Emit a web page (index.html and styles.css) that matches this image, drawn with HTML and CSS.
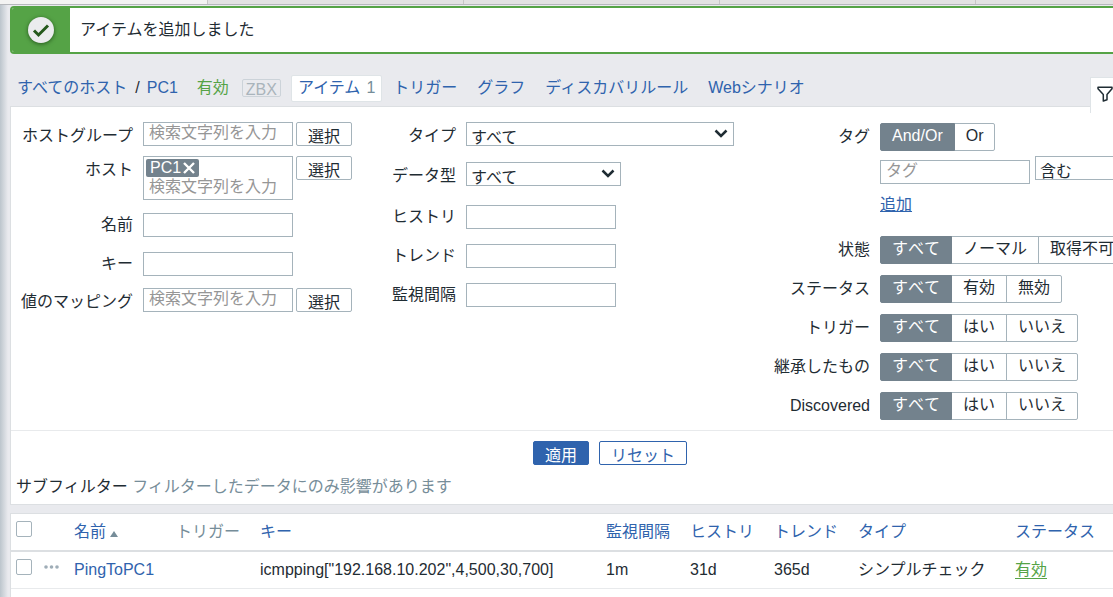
FILE: index.html
```html
<!DOCTYPE html>
<html lang="ja">
<head>
    <meta charset="UTF-8">
    <meta name="viewport" content="width=device-width, initial-scale=1.0">
    <title>アイテムの設定</title>
    <link rel="stylesheet" href="styles.css">
</head>
<body>
    <div class="tab-strip">
        <div class="strip-tab current"></div>
        <div class="strip-tab"></div>
        <div class="strip-tab"></div>
        <div class="strip-tab"></div>
        <div class="strip-tab"></div>
    </div>

    <main class="wrapper">
        <div class="message">
            <div class="message-icon">
                <svg width="36" height="36" viewBox="0 0 36 36">
                    <circle cx="18" cy="18" r="13" fill="#ebecee"/>
                    <path d="M11 18.5l4.5 4.5 9.5-9.5" fill="none" stroke="#25591c" stroke-width="3"/>
                </svg>
            </div>
            <span class="message-text">アイテムを追加しました</span>
        </div>

        <div class="top-bar">
            <nav class="host-nav">
                <a href="#">すべてのホスト</a>
                <span class="slash">/</span>
                <a href="#">PC1</a>
                <span class="enabled">有効</span>
                <span class="zbx">ZBX</span>
                <a href="#" class="selected">アイテム<span class="count">1</span></a>
                <a href="#">トリガー</a>
                <a href="#">グラフ</a>
                <a href="#">ディスカバリルール</a>
                <a href="#">Webシナリオ</a>
            </nav>
            <button class="filter-toggle" type="button" aria-label="フィルター">
                <svg width="16" height="16" viewBox="0 0 16 16">
                    <path d="M1 1.2h14v1.6L10 8.500v5.300L6.300 15V8.500L1 2.800z" fill="none" stroke="#1f2c33" stroke-width="1.500" stroke-linejoin="round"/>
                </svg>
            </button>
        </div>

        <form class="filter">
            <div class="filter-columns">
                <div class="filter-column">
                    <div class="row picker">
                        <label for="groups">ホストグループ</label>
                        <input type="text" id="groups" placeholder="検索文字列を入力">
                        <button type="button" class="btn-select">選択</button>
                    </div>
                    <div class="row picker">
                        <label for="hosts">ホスト</label>
                        <div class="multiselect">
                            <span class="tag">PC1<button type="button" aria-label="削除"><svg width="16" height="14" viewBox="0 0 16 14"><path d="M3 2l10 10M13 2L3 12" stroke="#fff" stroke-width="2.400"/></svg></button></span>
                            <input type="text" id="hosts" placeholder="検索文字列を入力">
                        </div>
                        <button type="button" class="btn-select">選択</button>
                    </div>
                    <div class="row plain">
                        <label for="name">名前</label>
                        <input type="text" id="name">
                    </div>
                    <div class="row plain">
                        <label for="key">キー</label>
                        <input type="text" id="key">
                    </div>
                    <div class="row picker">
                        <label for="valuemap">値のマッピング</label>
                        <input type="text" id="valuemap" placeholder="検索文字列を入力">
                        <button type="button" class="btn-select">選択</button>
                    </div>
                </div>

                <div class="filter-column">
                    <div class="row choice">
                        <label for="type">タイプ</label>
                        <div class="select type-select">
                            <select id="type"><option>すべて</option></select>
                            <svg width="14" height="9" viewBox="0 0 14 9"><path d="M1.500 1.500L7 7l5.500-5.500" fill="none" stroke="#1f2c33" stroke-width="2.500"/></svg>
                        </div>
                    </div>
                    <div class="row choice">
                        <label for="value-type">データ型</label>
                        <div class="select value-select">
                            <select id="value-type"><option>すべて</option></select>
                            <svg width="14" height="9" viewBox="0 0 14 9"><path d="M1.500 1.500L7 7l5.500-5.500" fill="none" stroke="#1f2c33" stroke-width="2.500"/></svg>
                        </div>
                    </div>
                    <div class="row plain">
                        <label for="history">ヒストリ</label>
                        <input type="text" id="history">
                    </div>
                    <div class="row plain">
                        <label for="trends">トレンド</label>
                        <input type="text" id="trends">
                    </div>
                    <div class="row plain">
                        <label for="interval">監視間隔</label>
                        <input type="text" id="interval">
                    </div>
                </div>

                <div class="filter-column">
                    <div class="row">
                        <label for="tag">タグ</label>
                        <div>
                            <div class="radios">
                                <input type="radio" name="evaltype" id="and-or" checked><label for="and-or">And/Or</label>
                                <input type="radio" name="evaltype" id="or"><label for="or">Or</label>
                            </div>
                            <div class="tag-row">
                                <input type="text" id="tag" placeholder="タグ">
                                <div class="select">
                                    <select aria-label="演算子"><option>含む</option></select>
                                </div>
                            </div>
                            <a href="#" class="add-link">追加</a>
                        </div>
                    </div>
                    <div class="row" role="radiogroup" aria-labelledby="l-state">
                        <span class="row-label" id="l-state">状態</span>
                        <div class="radios">
                            <input type="radio" name="state" id="state0" checked><label for="state0">すべて</label>
                            <input type="radio" name="state" id="state1"><label for="state1">ノーマル</label>
                            <input type="radio" name="state" id="state2"><label for="state2">取得不可</label>
                        </div>
                    </div>
                    <div class="row" role="radiogroup" aria-labelledby="l-status">
                        <span class="row-label" id="l-status">ステータス</span>
                        <div class="radios">
                            <input type="radio" name="status" id="status0" checked><label for="status0">すべて</label>
                            <input type="radio" name="status" id="status1"><label for="status1">有効</label>
                            <input type="radio" name="status" id="status2"><label for="status2">無効</label>
                        </div>
                    </div>
                    <div class="row" role="radiogroup" aria-labelledby="l-triggers">
                        <span class="row-label" id="l-triggers">トリガー</span>
                        <div class="radios">
                            <input type="radio" name="triggers" id="triggers0" checked><label for="triggers0">すべて</label>
                            <input type="radio" name="triggers" id="triggers1"><label for="triggers1">はい</label>
                            <input type="radio" name="triggers" id="triggers2"><label for="triggers2">いいえ</label>
                        </div>
                    </div>
                    <div class="row" role="radiogroup" aria-labelledby="l-inherited">
                        <span class="row-label" id="l-inherited">継承したもの</span>
                        <div class="radios">
                            <input type="radio" name="inherited" id="inherited0" checked><label for="inherited0">すべて</label>
                            <input type="radio" name="inherited" id="inherited1"><label for="inherited1">はい</label>
                            <input type="radio" name="inherited" id="inherited2"><label for="inherited2">いいえ</label>
                        </div>
                    </div>
                    <div class="row" role="radiogroup" aria-labelledby="l-discovered">
                        <span class="row-label" id="l-discovered">Discovered</span>
                        <div class="radios">
                            <input type="radio" name="discovered" id="discovered0" checked><label for="discovered0">すべて</label>
                            <input type="radio" name="discovered" id="discovered1"><label for="discovered1">はい</label>
                            <input type="radio" name="discovered" id="discovered2"><label for="discovered2">いいえ</label>
                        </div>
                    </div>
                </div>
            </div>

            <div class="filter-buttons">
                <button type="submit" class="btn-apply">適用</button>
                <button type="reset" class="btn-reset">リセット</button>
            </div>
            <div class="subfilter">サブフィルター <span class="grey">フィルターしたデータにのみ影響があります</span></div>
        </form>

        <div class="items-panel">
            <table class="items">
                <colgroup>
                    <col class="c-check"><col class="c-menu"><col class="c-name"><col class="c-mid"><col class="c-key">
                    <col class="c-mid"><col class="c-mid"><col class="c-mid"><col class="c-type"><col>
                </colgroup>
                <thead>
                    <tr>
                        <th><input type="checkbox" aria-label="すべて選択"></th>
                        <th></th>
                        <th><a href="#">名前<span class="arrow-up"></span></a></th>
                        <th class="grey">トリガー</th>
                        <th><a href="#">キー</a></th>
                        <th><a href="#">監視間隔</a></th>
                        <th><a href="#">ヒストリ</a></th>
                        <th><a href="#">トレンド</a></th>
                        <th><a href="#">タイプ</a></th>
                        <th><a href="#">ステータス</a></th>
                    </tr>
                </thead>
                <tbody>
                    <tr>
                        <td><input type="checkbox" aria-label="PingToPC1"></td>
                        <td><button type="button" class="btn-menu" aria-label="メニュー"><svg width="16" height="4" viewBox="0 0 16 4" fill="#9fadb7"><circle cx="2" cy="2" r="1.800"/><circle cx="7.500" cy="2" r="1.800"/><circle cx="13" cy="2" r="1.800"/></svg></button></td>
                        <td><a href="#">PingToPC1</a></td>
                        <td></td>
                        <td>icmpping["192.168.10.202",4,500,30,700]</td>
                        <td>1m</td>
                        <td>31d</td>
                        <td>365d</td>
                        <td>シンプルチェック</td>
                        <td><a href="#" class="status-on">有効</a></td>
                    </tr>
                </tbody>
            </table>
        </div>
    </main>
</body>
</html>
```

FILE: styles.css
```css
* {
    box-sizing: border-box;
}

body {
    margin: 0;
    min-height: 100vh;
    overflow: hidden;
    display: flex;
    flex-direction: column;
    background: #e9eaee;
    color: #1f2c33;
    font-family: "Liberation Sans", "Noto Sans CJK JP", sans-serif;
    font-size: 16px;
    line-height: 24px;
}

input, button, select {
    font: inherit;
    color: inherit;
}

a {
    color: #2f63ad;
    text-decoration: none;
}

/* Browser tab edge above the page */
.tab-strip {
    display: flex;
    height: 5px;
    background: #e2e2e2;
    border-bottom: 1px solid #b6b8bc;
}

.strip-tab {
    flex: none;
    width: 256px;
    border-right: 1px solid #c6c6c6;
}

.strip-tab.current {
    width: 208px;
    background: #f3f3f2;
}

.wrapper {
    flex: 1;
    display: flex;
    flex-direction: column;
    min-width: 1210px;
    padding: 1px 0 0 10px;
    background: linear-gradient(to right, #bcc5cc, #e9eaee 8px);
}

/* Message */
.message {
    display: flex;
    align-items: center;
    height: 48px;
    background: #fff;
    border: 2px solid #55a346;
    border-radius: 4px;
    overflow: hidden;
}

.message-icon {
    display: flex;
    align-items: center;
    justify-content: center;
    width: 58px;
    height: 44px;
    background: #55a346;
}

.message-icon svg {
    filter: drop-shadow(0 1px 2px #25591c);
}

.message-text {
    padding-left: 10px;
}

/* Navigation */
.top-bar {
    display: flex;
    justify-content: space-between;
    align-items: flex-start;
    height: 52px;
    padding-top: 21px;
}

.host-nav {
    display: flex;
    padding-left: 7px;
    line-height: 26px;
}

.host-nav a {
    padding: 0 6px;
    margin-right: 8px;
}

.host-nav a:first-child {
    padding: 0;
}

.host-nav .slash + a {
    padding: 0;
    margin-right: 19px;
}

.slash {
    margin-right: 7px;
}

.enabled {
    margin-right: 13px;
    color: #55a346;
}

.zbx {
    height: 18px;
    margin: 4px 10px 0 0;
    padding: 0 3px;
    border: 1px solid #ccd3d9;
    border-radius: 2px;
    color: #a9b4bb;
    line-height: 20px;
}

.host-nav .selected {
    height: 27px;
    margin-right: 5px;
    background: #fff;
    border: 1px solid #dfe4e7;
    border-radius: 2px;
    line-height: 24px;
}

.count {
    margin-left: 6px;
    color: #768d99;
}

.filter-toggle {
    position: relative;
    z-index: 1;
    display: flex;
    width: 120px;
    height: 36px;
    margin-top: 2px;
    padding: 8px 6px;
    background: #fff;
    border: 1px solid #dfe4e7;
    border-bottom: 0;
}

/* Filter */
.filter {
    background: #fff;
    border: 1px solid #dcdfe2;
}

.filter-columns {
    display: flex;
    gap: 40px;
    height: 324px;
    padding-top: 15px;
    border-bottom: 1px solid #e8eaec;
}

.row {
    display: flex;
    align-items: flex-start;
    margin-bottom: 11px;
}

.row > label,
.row > .row-label {
    flex: none;
    width: 96px;
    margin-right: 10px;
    padding-top: 4px;
    line-height: 20px;
    text-align: right;
}

.filter-column:first-child .row > label {
    width: 122px;
}

.filter-column:nth-child(2) .row > label {
    width: 64px;
}

.filter-column:nth-child(3) {
    padding-top: 1px;
}

.picker {
    margin-bottom: 10px;
}

.choice {
    margin-bottom: 16px;
}

.plain {
    padding-top: 3px;
    margin-bottom: 12px;
}

.row.plain > label {
    padding-top: 0;
    line-height: 24px;
}

input[type="text"] {
    width: 150px;
    height: 24px;
    padding: 0 5px 2px;
    border: 1px solid #a5b3bb;
    border-radius: 0;
    background: #fff;
}

::placeholder {
    color: #969696;
}

.multiselect {
    width: 150px;
    height: 44px;
    padding: 2px;
    border: 1px solid #a5b3bb;
}

.multiselect input[type="text"] {
    display: block;
    width: 100%;
    height: 20px;
    padding: 0 3px;
    border: 0;
}

.tag {
    display: flex;
    align-items: center;
    width: 53px;
    height: 18px;
    padding-left: 4px;
    border-radius: 2px;
    background: #73828d;
    color: #fff;
}

.tag button {
    display: flex;
    padding: 0;
    border: 0;
    background: none;
}

.btn-select,
.btn-apply,
.btn-reset {
    height: 24px;
    padding: 3px 11px 0;
    border: 1px solid #a5b3bb;
    border-radius: 2px;
    background: #fff;
    line-height: 22px;
}

.btn-select {
    margin-left: 3px;
}

.select {
    position: relative;
}

.select select {
    display: block;
    width: 100%;
    height: 24px;
    padding: 3px 4px 0;
    border: 1px solid #a5b3bb;
    border-radius: 0;
    background: #fff;
    appearance: none;
}

.select svg {
    position: absolute;
    top: 7px;
    right: 6px;
    pointer-events: none;
}

.type-select {
    width: 268px;
}

.value-select {
    width: 155px;
}

.radios {
    display: flex;
    position: relative;
}

.radios input {
    position: absolute;
    opacity: 0;
}

.radios label {
    height: 28px;
    margin-left: -1px;
    padding: 0 11px;
    border: 1px solid #a5b3bb;
    font-kerning: none;
    white-space: nowrap;
}

.radios label:first-of-type {
    min-width: 72px;
    margin-left: 0;
    border-radius: 2px 0 0 2px;
    text-align: center;
}

.radios label:last-of-type {
    border-radius: 0 2px 2px 0;
}

.radios input:checked + label {
    position: relative;
    background: #73828d;
    border-color: #73828d;
    color: #fff;
}

.tag-row {
    display: flex;
    gap: 5px;
    margin: 5px 0 9px;
}

.tag-row input {
    margin-top: 4px;
}

.tag-row .select {
    width: 120px;
}

.add-link {
    display: block;
    margin-bottom: 8px;
    text-decoration: underline;
}

.filter-buttons {
    display: flex;
    justify-content: center;
    gap: 10px;
    padding: 10px 0;
}

.btn-apply,
.btn-reset {
    border-color: #2f63ad;
    color: #2f63ad;
}

.btn-apply {
    background: #2f63ad;
    color: #fff;
}

.subfilter {
    padding: 0 5px 5px;
}

.grey {
    color: #768d99;
}

/* Item list */
.items-panel {
    flex: 1;
    margin-top: 8px;
    background: #fff;
    border: 1px solid #dcdfe2;
    border-bottom: 0;
}

.items {
    width: 100%;
    table-layout: fixed;
    border-collapse: separate;
    border-spacing: 0;
}

.items th,
.items td {
    height: 37px;
    padding: 0 5px;
    border-bottom: 1px solid #e8eaec;
    font-weight: normal;
    text-align: left;
    white-space: nowrap;
}

.items th {
    height: 38px;
    border-bottom: 2px solid #dcdfe2;
}

.c-check { width: 28px; }
.c-menu { width: 30px; }
.c-name { width: 102px; }
.c-mid { width: 84px; }
.c-key { width: 346px; }
.c-type { width: 157px; }

.items input[type="checkbox"] {
    display: block;
    width: 16px;
    height: 16px;
    margin: 0 0 6px;
    border: 1px solid #a5b3bb;
    border-radius: 2px;
    background: #fff;
    appearance: none;
}

.btn-menu {
    display: flex;
    margin-bottom: 6px;
    padding: 0;
    border: 0;
    background: none;
}

.arrow-up {
    display: inline-block;
    margin-left: 4px;
    border: 4px solid transparent;
    border-top: 0;
    border-bottom: 6px solid #768d99;
}

.status-on {
    color: #55a346;
    border-bottom: 1px solid #55a346;
}
```
